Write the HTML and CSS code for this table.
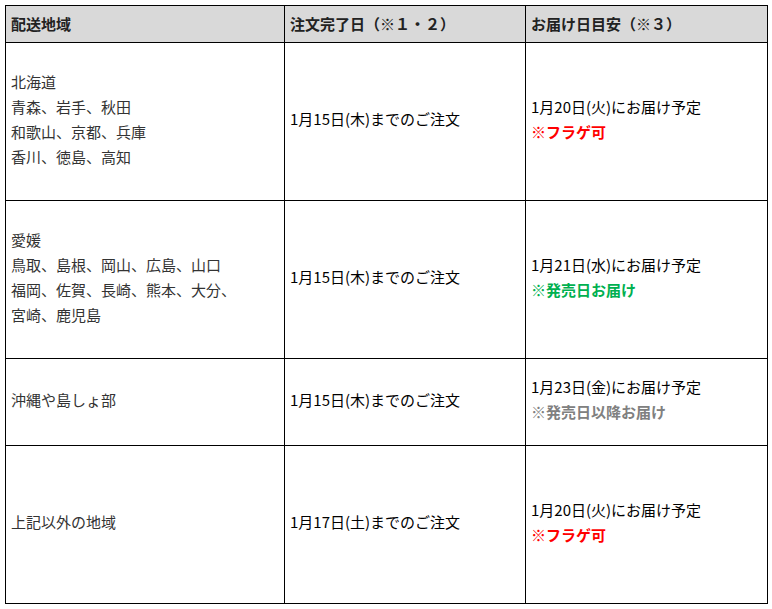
FILE: index.html
```html
<!DOCTYPE html>
<html lang="ja">
<head>
<meta charset="utf-8">
<link rel="stylesheet" href="styles.css">
</head>
<body>
<table class="ship">
  <colgroup>
    <col class="c1"><col class="c2"><col class="c3">
  </colgroup>
  <thead>
    <tr class="head">
      <th>配送地域</th>
      <th>注文完了日（※１・２）</th>
      <th>お届け日目安（※３）</th>
    </tr>
  </thead>
  <tbody>
    <tr class="tall">
      <td class="area">北海道<br>青森、岩手、秋田<br>和歌山、京都、兵庫<br>香川、徳島、高知</td>
      <td>1月15日(木)までのご注文</td>
      <td>1月20日(火)にお届け予定<br><span class="note red">※フラゲ可</span></td>
    </tr>
    <tr class="tall">
      <td class="area">愛媛<br>鳥取、島根、岡山、広島、山口<br>福岡、佐賀、長崎、熊本、大分、<br>宮崎、鹿児島</td>
      <td>1月15日(木)までのご注文</td>
      <td>1月21日(水)にお届け予定<br><span class="note green">※発売日お届け</span></td>
    </tr>
    <tr class="short">
      <td class="area">沖縄や島しょ部</td>
      <td>1月15日(木)までのご注文</td>
      <td>1月23日(金)にお届け予定<br><span class="note gray">※発売日以降お届け</span></td>
    </tr>
    <tr class="tall">
      <td class="area">上記以外の地域</td>
      <td>1月17日(土)までのご注文</td>
      <td>1月20日(火)にお届け予定<br><span class="note red">※フラゲ可</span></td>
    </tr>
  </tbody>
</table>
</body>
</html>
```

FILE: styles.css
```css
html, body {
  margin: 0;
  padding: 0;
  background: #fff;
}
body {
  padding: 5px 0 0 5px;
  font-family: "Noto Sans CJK JP", "Noto Sans", sans-serif;
  color: #000;
}
.ship {
  border-collapse: collapse;
  table-layout: fixed;
  width: 762px;
  border: 1px solid #000;
}
.c1 { width: 279px; }
.c2 { width: 241px; }
.c3 { width: 242px; }
.ship th, .ship td {
  border: 1px solid #000;
  text-align: left;
  vertical-align: middle;
  font-size: 15px;
  line-height: 25px;
}
.ship td {
  padding: 0 5px 6px;
}
.ship th {
  background: #d9d9d9;
  font-weight: bold;
  font-size: 15px;
  color: #222;
  height: 34px;
  padding: 0 5px 2px;
}
.tall td { height: 151px; }
.short td { height: 80px; }
.area {
  font-size: 14px;
  color: #333;
}
.note { font-weight: bold; }
.red { color: #ff0000; }
.green { color: #00b050; }
.gray { color: #808080; }
```
